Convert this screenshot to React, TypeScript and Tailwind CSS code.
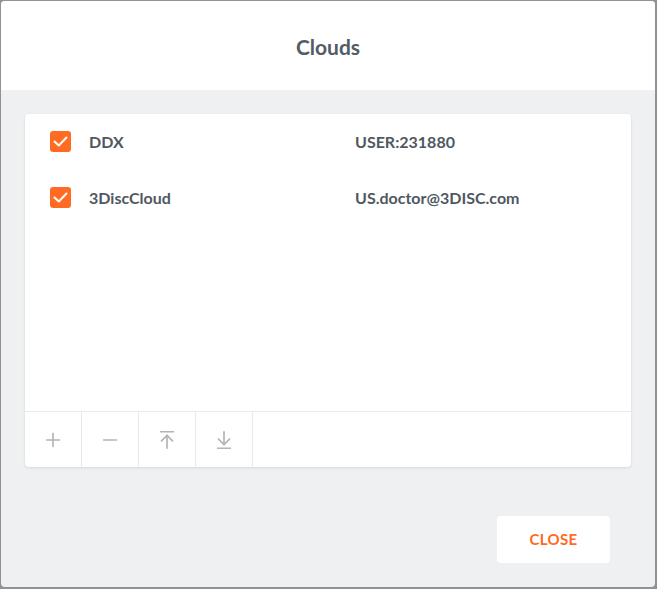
import { Plus, Minus, ArrowUpToLine, ArrowDownToLine } from 'lucide-react';

const clouds = [
  { name: 'DDX', account: 'USER:231880' },
  { name: '3DiscCloud', account: 'US.doctor@3DISC.com' },
];

function Check() {
  return (
    <div className="w-[21px] h-[21px] rounded-[3px] bg-[#ff6b22] flex items-center justify-center shrink-0">
      <svg width="21" height="21" viewBox="0 0 21 21" fill="none">
        <path d="M4.5 10.5 L8.8 14.5 L16.5 6.5" stroke="white" strokeWidth="2" strokeLinecap="round" strokeLinejoin="round" />
      </svg>
    </div>
  );
}

export default function App() {
  const tools = [Plus, Minus, ArrowUpToLine, ArrowDownToLine];

  return (
    <div className="w-[657px] h-[589px] bg-[#8f9296] p-[1px_2px_2px_1px] font-['Lato','Noto_Sans',sans-serif]">
      <div className="h-full w-full rounded-[4px] overflow-hidden flex flex-col bg-[#eff0f2]">
        {/* Header */}
        <div className="h-[89px] bg-white flex items-center justify-center shrink-0 pt-[2px]">
          <h1 className="text-[21px] font-bold text-[#535c65]">Clouds</h1>
        </div>

        {/* Body */}
        <div className="flex-1 flex flex-col px-[24px] pt-[24px]">
          <div className="h-[353px] bg-white rounded-[4px] shadow-[0_1px_3px_rgba(0,0,0,0.1)] flex flex-col">
            <div className="flex-1 pt-[17px]">
              {clouds.map((c) => (
                <div key={c.name} className="h-[56px] flex items-start pl-[25px]">
                  <Check />
                  <span className="ml-[18px] w-[266px] text-[16px] font-bold text-[#4f5861] leading-[22px]">{c.name}</span>
                  <span className="text-[16px] font-bold text-[#4f5861] leading-[22px]">{c.account}</span>
                </div>
              ))}
            </div>
            <div className="h-[56px] border-t border-[#e8e9eb] flex">
              {tools.map((Icon, i) => (
                <button key={i} className="w-[57px] h-full border-r border-[#e8e9eb] flex items-center justify-center text-[#b1b4b8]">
                  <Icon className="w-[22px] h-[22px]" strokeWidth={1.8} />
                </button>
              ))}
            </div>
          </div>

          <div className="flex justify-end mt-[49px] pr-[21px]">
            <button className="w-[113px] h-[47px] bg-white rounded-[4px] text-[15px] font-bold text-[#ff6a1f] tracking-[0.3px]">
              CLOSE
            </button>
          </div>
        </div>
      </div>
    </div>
  );
}
